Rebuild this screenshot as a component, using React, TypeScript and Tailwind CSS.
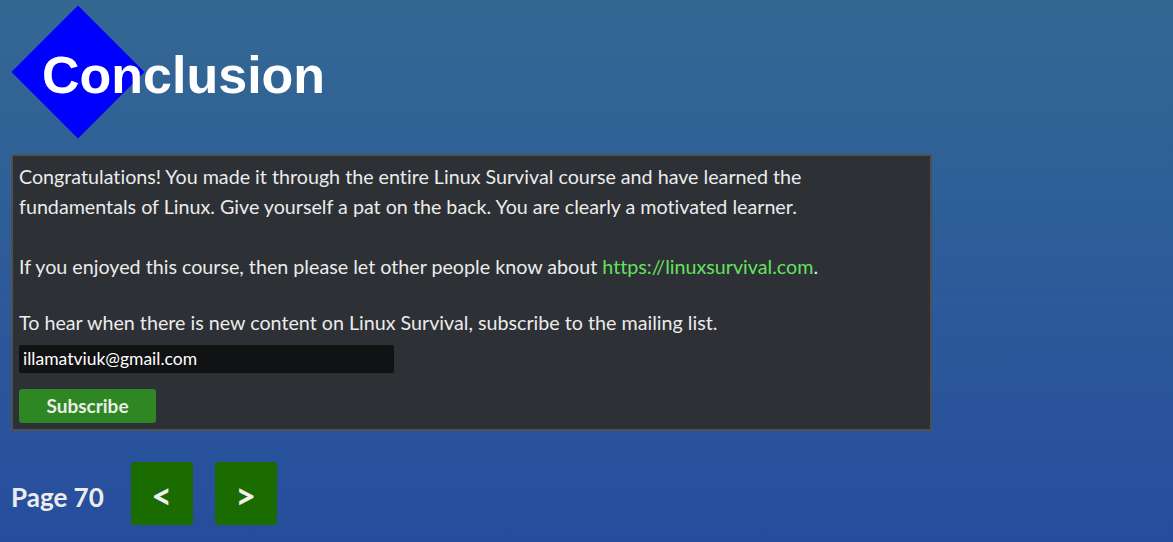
import React from 'react';

const App: React.FC = () => {
  return (
    <div
      className="min-h-[542px] w-full bg-gradient-to-b from-[#346893] to-[#274d9e] pl-[11px] pt-[6px]"
      style={{ fontFamily: 'Lato, "Noto Sans", sans-serif', fontVariantLigatures: 'none' }}
    >
      {/* title with diamond */}
      <div className="relative h-[148px]">
        <div className="absolute left-[20px] top-[19px] h-[94px] w-[94px] rotate-45 bg-[#0000ff]" />
        <h1
          className="absolute left-[31px] top-[43px] text-[52px] font-bold leading-none text-white"
          style={{ fontFamily: '"Liberation Sans", Arial, sans-serif' }}
        >
          Conclusion
        </h1>
      </div>

      <div className="w-[921px] border-2 border-[#4e5154] bg-[#2d3034] pb-[6px] pl-[6px] pr-[14px] pt-[6px] text-[19.7px] leading-[30px] text-[#ebebeb]">
        <p>
          Congratulations! You made it through the entire Linux Survival course and have learned the
          fundamentals of Linux. Give yourself a pat on the back. You are clearly a motivated learner.
          <br />
          <br />
          If you enjoyed this course, then please let other people know about{' '}
          <a className="text-[#66e060]">https://linuxsurvival.com</a>.
        </p>
        <p className="mt-[26px]">To hear when there is new content on Linux Survival, subscribe to the mailing list.</p>
        <input
          className="mt-[7px] block h-[28px] w-[375px] rounded-[2px] bg-[#111213] px-[4px] text-[17.5px] text-white outline-none"
          defaultValue="illamatviuk@gmail.com"
        />
        <button className="mt-[16px] h-[34px] w-[137px] rounded-[3px] bg-[#2e8722] text-[19px] font-bold text-[#ececec]">
          Subscribe
        </button>
      </div>

      <div className="mt-[31px] flex items-center">
        <span className="pt-[8px] text-[26px] font-bold text-[#ececec]">Page 70</span>
        <button className="ml-[27px] flex h-[63px] w-[62px] items-center justify-center rounded-[3px] bg-[#1a6b00] pt-[3px] text-[36px] font-bold text-[#f0f0f0]">
          &lt;
        </button>
        <button className="ml-[22px] flex h-[63px] w-[62px] items-center justify-center rounded-[3px] bg-[#1a6b00] pt-[3px] text-[36px] font-bold text-[#f0f0f0]">
          &gt;
        </button>
      </div>
    </div>
  );
};

export default App;
